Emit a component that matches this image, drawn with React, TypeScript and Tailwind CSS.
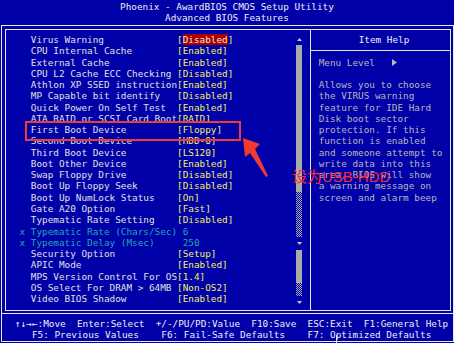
const rows: { label: string; value: string; kind?: 'x' | 'hl' }[] = [
  { label: 'Virus Warning', value: '[Disabled]', kind: 'hl' },
  { label: 'CPU Internal Cache', value: '[Enabled]' },
  { label: 'External Cache', value: '[Enabled]' },
  { label: 'CPU L2 Cache ECC Checking', value: '[Disabled]' },
  { label: 'Athlon XP SSED instruction', value: '[Enabled]' },
  { label: 'MP Capable bit identify', value: '[Disabled]' },
  { label: 'Quick Power On Self Test', value: '[Enabled]' },
  { label: 'ATA RAID or SCSI Card Boot', value: '[RAID]' },
  { label: 'First Boot Device', value: '[Floppy]' },
  { label: 'Second Boot Device', value: '[HDD-0]' },
  { label: 'Third Boot Device', value: '[LS120]' },
  { label: 'Boot Other Device', value: '[Enabled]' },
  { label: 'Swap Floppy Drive', value: '[Disabled]' },
  { label: 'Boot Up Floppy Seek', value: '[Disabled]' },
  { label: 'Boot Up NumLock Status', value: '[On]' },
  { label: 'Gate A20 Option', value: '[Fast]' },
  { label: 'Typematic Rate Setting', value: '[Disabled]' },
  { label: 'Typematic Rate (Chars/Sec)', value: ' 6', kind: 'x' },
  { label: 'Typematic Delay (Msec)', value: ' 250', kind: 'x' },
  { label: 'Security Option', value: '[Setup]' },
  { label: 'APIC Mode', value: '[Enabled]' },
  { label: 'MPS Version Control For OS', value: '[1.4]' },
  { label: 'OS Select For DRAM > 64MB', value: '[Non-OS2]' },
  { label: 'Video BIOS Shadow', value: '[Enabled]' },
]

const help = [
  'Allows you to choose',
  'the VIRUS warning',
  'feature for IDE Hard',
  'Disk boot sector',
  'protection. If this',
  'function is enabled',
  'and someone attempt to',
  'write data into this',
  'area, BIOS will show',
  'a warning message on',
  'screen and alarm beep',
]

function Arrow({ up }: { up?: boolean }) {
  return (
    <svg width="5" height="3" viewBox="0 0 5 3">
      <polygon points={up ? '2.5,0 5,3 0,3' : '0,0 5,0 2.5,3'} fill="#c8c8c8" />
    </svg>
  )
}

const hatch =
  'bg-[repeating-conic-gradient(#a8aca8_0%_25%,#0000a8_0%_50%)] bg-[length:2px_2px]'

export default function App() {
  return (
    <div className="relative w-[454px] h-[343px] overflow-hidden bg-[#0000a8] font-['DejaVu_Sans_Mono',monospace] text-[9.35px] leading-[11.26px] text-[#e0e0e0]">
      {/* titre */}
      <div className="h-[25px] pt-[0.5px] text-center whitespace-pre text-[#f0f0f0]">
        <div>Phoenix - AwardBIOS CMOS Setup Utility</div>
        <div>Advanced BIOS Features</div>
      </div>

      <div className="ml-[1px] w-[453px] h-[317px] border border-[#e8e8e8] flex flex-col">
        <div className="ml-[3px] mr-[2px] mt-[3px] h-[282px] border border-[#e8e8e8] flex">
          {/* liste des options */}
          <div className="flex-1 flex">
            <div className="flex-1 pt-[4px] pl-[13.5px] whitespace-pre">
              {rows.map((r) => {
                if (r.kind === 'x') {
                  return (
                    <div key={r.label} className="text-[#20aaaa]">
                      {'x ' + r.label.padEnd(26) + r.value}
                    </div>
                  )
                }
                return (
                  <div key={r.label}>
                    {'  ' + r.label.padEnd(26)}
                    {r.kind === 'hl' ? (
                      <span className="text-[#f4f060]">
                        [<span className="bg-[#a80000] text-[#f4e8d8]">Disabled</span>]
                      </span>
                    ) : (
                      <span className="text-[#f4f060]">{r.value}</span>
                    )}
                  </div>
                )
              })}
            </div>
            {/* barre de défilement */}
            <div className="w-[6px] mr-[8px] flex flex-col">
              <div className="h-[15px] flex items-end justify-center pb-[4px]">
                <Arrow up />
              </div>
              <div className="h-[147px] bg-[#a8aca8]" />
              <div className={`h-[45px] ${hatch}`} />
              <div className="h-[13px] flex items-center justify-center">
                <Arrow />
              </div>
              <div className="h-[33px] bg-[#a8aca8]" />
              <div className={`h-[13px] ${hatch}`} />
              <div className="flex-1 flex items-start justify-center pt-[5px]">
                <Arrow />
              </div>
            </div>
          </div>

          {/* aide */}
          <div className="w-[140px] border-l border-[#e8e8e8] flex flex-col">
            <div className="h-[21px] border-b border-[#e8e8e8] flex items-center pl-[47.7px] text-[#f0f0f0]">
              Item Help
            </div>
            <div className="pt-[5.5px] pl-[7.7px] whitespace-pre text-[#b8b8b8]">
              <div className="flex items-center">
                {'Menu Level   '}
                <svg width="5" height="7" viewBox="0 0 5 7">
                  <polygon points="0,0 5,3.5 0,7" fill="#b8b8b8" />
                </svg>
              </div>
              <div>&nbsp;</div>
              {help.map((l) => (
                <div key={l}>{l}</div>
              ))}
            </div>
          </div>
        </div>

        {/* pied de page */}
        <div className="mt-[2px] flex-1 border-t border-[#e8e8e8] pt-[4px] pl-[13px] whitespace-pre text-[#f0f0f0]">
          <div>↑↓→←:Move  Enter:Select  +/-/PU/PD:Value  F10:Save  ESC:Exit  F1:General Help</div>
          <div>{'   F5: Previous Values    F6: Fail-Safe Defaults    F7: Optimized Defaults'}</div>
        </div>
      </div>

      {/* annotations */}
      <div className="absolute left-[25px] top-[121px] w-[216px] h-[20px] border-2 border-[#f23b2f]" />
      <svg className="absolute left-0 top-0" width="454" height="343">
        <polygon
          points="243,138 260,144 255,149 268,176 266,177 250,153 245,157"
          fill="#f23b2f"
        />
      </svg>
      <div className="absolute left-[292px] top-[169px] text-[15px] leading-[15px] text-[#ff2a2a] font-['Liberation_Sans','Noto_Sans_CJK_SC',sans-serif]">
        设为USB-HDD
      </div>
      <div className="absolute left-[336px] top-[335px] w-[1px] h-[8px] bg-[#e8e8e8]" />
    </div>
  )
}
